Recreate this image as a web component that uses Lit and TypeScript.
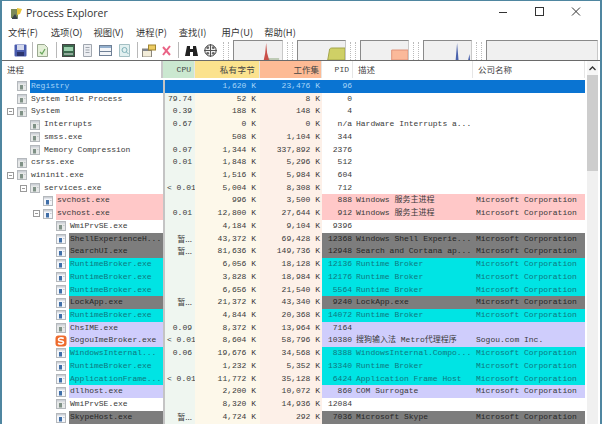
import { LitElement, html, css, svg } from "lit";
import { customElement } from "lit/decorators.js";

type Row = { n: string; l: number; e?: boolean; ic?: "g" | "b" | "s"; c?: string; cpu?: string; p: string; w: string; pid: string; d?: string; co?: string };
const MS = "Microsoft Corporation";
const rows: Row[] = [
  { n: "Registry", l: 0, c: "sel", p: "1,620 K", w: "23,476 K", pid: "96" },
  { n: "System Idle Process", l: 0, cpu: "79.74", p: "52 K", w: "8 K", pid: "0" },
  { n: "System", l: 0, e: true, cpu: "0.39", p: "188 K", w: "148 K", pid: "4" },
  { n: "Interrupts", l: 1, cpu: "0.67", p: "0 K", w: "0 K", pid: "n/a", d: "Hardware Interrupts a..." },
  { n: "smss.exe", l: 1, p: "508 K", w: "1,104 K", pid: "344" },
  { n: "Memory Compression", l: 1, cpu: "0.07", p: "1,344 K", w: "337,892 K", pid: "2376" },
  { n: "csrss.exe", l: 0, cpu: "0.01", p: "1,848 K", w: "5,296 K", pid: "512" },
  { n: "wininit.exe", l: 0, e: true, p: "1,516 K", w: "5,984 K", pid: "604" },
  { n: "services.exe", l: 1, e: true, cpu: "< 0.01", p: "5,004 K", w: "8,308 K", pid: "712" },
  { n: "svchost.exe", l: 2, ic: "b", c: "pink", p: "996 K", w: "3,500 K", pid: "888", d: "Windows 服务主进程", co: MS },
  { n: "svchost.exe", l: 2, e: true, ic: "b", c: "pink", cpu: "0.01", p: "12,800 K", w: "27,644 K", pid: "912", d: "Windows 服务主进程", co: MS },
  { n: "WmiPrvSE.exe", l: 3, p: "4,184 K", w: "9,104 K", pid: "9396" },
  { n: "ShellExperienceH...", l: 3, ic: "b", c: "gray", cpu: "暂...", p: "43,372 K", w: "69,428 K", pid: "12368", d: "Windows Shell Experie...", co: MS },
  { n: "SearchUI.exe", l: 3, ic: "b", c: "gray", cpu: "暂...", p: "81,636 K", w: "149,736 K", pid: "12948", d: "Search and Cortana ap...", co: MS },
  { n: "RuntimeBroker.exe", l: 3, ic: "b", c: "cyan", p: "6,056 K", w: "18,128 K", pid: "12136", d: "Runtime Broker", co: MS },
  { n: "RuntimeBroker.exe", l: 3, ic: "b", c: "cyan", p: "3,828 K", w: "18,984 K", pid: "12176", d: "Runtime Broker", co: MS },
  { n: "RuntimeBroker.exe", l: 3, ic: "b", c: "cyan", p: "6,656 K", w: "21,540 K", pid: "5564", d: "Runtime Broker", co: MS },
  { n: "LockApp.exe", l: 3, ic: "b", c: "gray", cpu: "暂...", p: "21,372 K", w: "43,340 K", pid: "9240", d: "LockApp.exe", co: MS },
  { n: "RuntimeBroker.exe", l: 3, ic: "b", c: "cyan", p: "4,844 K", w: "20,368 K", pid: "14072", d: "Runtime Broker", co: MS },
  { n: "ChsIME.exe", l: 3, c: "lav", cpu: "0.09", p: "8,372 K", w: "13,964 K", pid: "7164" },
  { n: "SogouImeBroker.exe", l: 3, ic: "s", c: "lav", cpu: "< 0.01", p: "8,604 K", w: "58,796 K", pid: "10380", d: "搜狗输入法 Metro代理程序", co: "Sogou.com Inc." },
  { n: "WindowsInternal...", l: 3, ic: "b", c: "cyan", cpu: "0.06", p: "19,676 K", w: "34,568 K", pid: "8388", d: "WindowsInternal.Compo...", co: MS },
  { n: "RuntimeBroker.exe", l: 3, ic: "b", c: "cyan", p: "1,232 K", w: "5,352 K", pid: "13340", d: "Runtime Broker", co: MS },
  { n: "ApplicationFrame...", l: 3, ic: "b", c: "cyan", cpu: "< 0.01", p: "11,772 K", w: "35,128 K", pid: "6424", d: "Application Frame Host", co: MS },
  { n: "dllhost.exe", l: 3, ic: "b", c: "lav", p: "2,200 K", w: "10,072 K", pid: "860", d: "COM Surrogate", co: MS },
  { n: "WmiPrvSE.exe", l: 3, p: "8,320 K", w: "14,936 K", pid: "12084" },
  { n: "SkypeHost.exe", l: 3, ic: "b", c: "gray", cpu: "暂...", p: "4,724 K", w: "292 K", pid: "7036", d: "Microsoft Skype", co: MS },
];

const menus = ["文件(F)", "选项(O)", "视图(V)", "进程(P)", "查找(I)", "用户(U)", "帮助(H)"];

const tools: { w: number; m: number; i: unknown }[] = [
  { w: 13, m: 5, i: svg`<rect x="0.5" y="0.5" width="12" height="12" rx="1" fill="#4a5cae"/><rect x="3" y="1" width="7" height="5" fill="#d4d9ec"/><rect x="3" y="8" width="7" height="4" fill="#2c356e"/>` },
  { w: 1, m: 4, i: svg`<rect width="1" height="16" fill="#b8b8b8"/>` },
  { w: 11, m: 8, i: svg`<path d="M.5.5h7l3 3v9H.5z" fill="#e4efd8" stroke="#9aa890"/><path d="M3 8l2 2 3-5" fill="none" stroke="#6aa85c" stroke-width="1.300"/>` },
  { w: 1, m: 5, i: svg`<rect width="1" height="16" fill="#b8b8b8"/>` },
  { w: 13, m: 7, i: svg`<rect x=".5" y=".5" width="12" height="12" fill="#3c6a4e" stroke="#444"/><rect x="2" y="3" width="9" height="4" fill="#9ccfac"/><path d="M2 10h9" stroke="#e8e8e8"/>` },
  { w: 11, m: 6, i: svg`<path d="M1.500.5h8v12h-8z" fill="#eceef2" stroke="#a0a6ae"/><path d="M3.500 3.500h4M3.500 6h4M3.500 8.500h4" stroke="#a0a6ae"/>` },
  { w: 13, m: 7, i: svg`<rect x=".5" y="1.500" width="12" height="10" fill="#f3f5f8" stroke="#6f8096"/><rect x="1" y="2" width="11" height="2" fill="#94b0ce"/><path d="M1 7.500h11" stroke="#6f8096"/>` },
  { w: 11, m: 7, i: svg`<path d="M.5.5h10v12H.5z" fill="#e2f0f0" stroke="#a4c0c4"/><circle cx="5.500" cy="6" r="2.500" fill="none" stroke="#7eb0b8"/><path d="M7.500 8l2 2" stroke="#7eb0b8"/>` },
  { w: 1, m: 4, i: svg`<rect width="1" height="16" fill="#b8b8b8"/>` },
  { w: 14, m: 5, i: svg`<rect x=".5" y="5" width="9" height="8" fill="#f2ecd8" stroke="#8a867c"/><rect x="1" y="5" width="9" height="2" fill="#80838a"/><rect x="6.500" y="1" width="7" height="5" fill="#edcc62" stroke="#a08430"/>` },
  { w: 11, m: 6, i: svg`<path d="M2 3l7 8M9 2L2 11" stroke="#ea6486" stroke-width="2" fill="none"/>` },
  { w: 1, m: 5, i: svg`<rect width="1" height="16" fill="#b8b8b8"/>` },
  { w: 15, m: 5, i: svg`<path d="M3 2h3v3h3V2h3l2 10h-5V8H6v4H1z" fill="#222"/>` },
  { w: 13, m: 7, i: svg`<circle cx="6.500" cy="6.500" r="5.700" fill="#f0f0f0" stroke="#444"/><path d="M6.500 0v13M0 6.500h13" stroke="#555"/><circle cx="3.700" cy="3.700" r="1.400" fill="#666"/><circle cx="9.300" cy="3.700" r="1.400" fill="#666"/><circle cx="3.700" cy="9.300" r="1.400" fill="#666"/><circle cx="9.300" cy="9.300" r="1.400" fill="#666"/>` },
];

const graphs: { w: number; g: unknown }[] = [
  { w: 50, g: svg`<path d="M31 19L32.500 12 33.500 2 34.500 12 36 17 37 19z" fill="#c9504a"/><path d="M36 18h11" stroke="#8aa47a"/>` },
  { w: 49, g: svg`<path d="M31 19l2-11q1-1 2-1H49v12z" fill="#cfd066" stroke="#a2a448"/>` },
  { w: 49, g: svg`<path d="M32 19V9h17v10z" fill="#fbb99a" stroke="#e0917a"/>` },
  { w: 49, g: svg`<path d="M33 19l.800-9 .700-8 .700 8 .800 9zM46 19l1.500-6 .5 6z" fill="#4a62ac"/>` },
  { w: 112, g: svg`` },
];

function procIcon(kind: "g" | "b" | "s") {
  if (kind === "s")
    return html`<svg class="ic sg" viewBox="0 0 12 12"><rect x=".5" y=".5" width="11" height="11" rx="3" fill="#ee6b2d"/><path d="M8.800 3.500C6 2.300 3.200 3 3.500 4.800 3.800 6.500 8.500 5.500 8.500 7.500 8.500 9.300 5 9.500 3 8.300" fill="none" stroke="#fff" stroke-width="1.600"/></svg>`;
  const m = kind === "b" ? "#3f6ea8" : "#7f9186";
  const bg = kind === "b" ? "#f4f6fa" : "#e6e8e8";
  return html`<svg class="ic" viewBox="0 0 10 10"><rect x=".5" y=".5" width="9" height="9" fill="${bg}" stroke="#b4b8bc"/><rect x="1" y="1" width="8" height="1.500" fill="#ccd0d6"/><rect x="3" y="4" width="3" height="4.500" fill="${m}"/><rect x="7" y="4" width="1.500" height="1" fill="#c4c8cc"/></svg>`;
}

@customElement("app-root")
export class AppRoot extends LitElement {
  static styles = css`
    :host { display: block; width: 602px; height: 424px; overflow: hidden; background: #fff; }
    .win { box-sizing: border-box; width: 602px; height: 424px; overflow: hidden; border: 2px solid #4f86a0; border-top-width: 1px; border-bottom: 0; display: flex; flex-direction: column; font-family: "Noto Sans CJK SC", "Noto Sans", sans-serif; color: #222; background: #fff; }
    .title { height: 24px; flex: none; display: flex; align-items: center; padding-left: 8px; }
    .title .logo { width: 13px; height: 13px; margin-right: 3px; }
    .title .tx { font: 10.500px "Open Sans", "Noto Sans", sans-serif; color: #333; flex: 1; }
    .ctl { width: 36.500px; height: 22px; display: flex; align-items: center; justify-content: center; }
    .ctl svg { width: 10px; height: 10px; }
    .ctls { display: flex; margin-right: 6px; align-self: flex-start; }
    .menu { height: 15px; flex: none; display: flex; gap: 12px; padding-left: 6px; font-size: 9.300px; line-height: 15px; color: #333; }
    .menu span { white-space: nowrap; width: 30.700px; }
    .bar { height: 20px; flex: none; display: flex; align-items: flex-end; background: #fff; border-bottom: 1px solid #6a6a6a; }
    .tools { display: flex; align-items: center; height: 20px; padding-left: 12px; width: 217px; flex: none; box-sizing: border-box; }
    .tools svg { flex: none; display: block; }
    .grip { width: 4px; height: 18px; border-left: 1px dotted #bbb; border-right: 1px dotted #bbb; margin: 0 4px; flex: none; align-self: flex-end; }
    .graphs { display: flex; height: 20px; }
    .graph { display: flex; height: 20px; align-items: flex-end; }
    .graph svg { display: block; background: #f0f0f0; border-top: 1px solid #8a8a8a; border-left: 1px solid #8a8a8a; border-right: 1px solid #c8c8c8; box-sizing: border-box; height: 20px; flex: none; }
    .main { flex: 1; display: flex; min-height: 0; }
    .table { width: 585px; flex: none; overflow: hidden; }
    .head, .row { display: grid; grid-template-columns: 161px 32px 65px 62px 31px 120px 112px; }
    .head { height: 17px; margin-bottom: 2px; font-size: 8.500px; line-height: 17px; color: #444; }
    .hc { box-sizing: border-box; padding: 0 2px; border-right: 1px solid #e6e6e6; white-space: nowrap; overflow: hidden; }
    .hn { padding-left: 5px; border-right: 2px solid #c8c8c8; }
    .hcpu { background: #cbe8d0; text-align: right; padding-right: 3px; font: 8px/17px "Liberation Mono", monospace; }
    .hp { background: #fbe28d; text-align: right; padding-right: 4px; letter-spacing: .3px; }
    .hw { background: #fdbb95; text-align: right; padding-right: 2px; }
    .hpid { text-align: right; padding-right: 3px; font: 8px/17px "Liberation Mono", monospace; }
    .hd { padding-left: 5px; }
    .row { height: 12.730px; font: 8px/11px "Liberation Mono", "Noto Sans CJK SC", monospace; color: #3a3a3a; white-space: nowrap; }
    .row:last-child { height: 15px; }
    .nm { display: flex; align-items: center; overflow: hidden; height: 100%; }
    .sepl { border-left: 2px solid #c4c4c4; box-sizing: border-box; }
    .exp { width: 7px; height: 7px; box-sizing: border-box; flex: none; margin-right: 3px; }
    .exp.on { border: 1px solid #9a9a9a; background: linear-gradient(#9a9a9a, #9a9a9a) center / 3px 1px no-repeat #fff; }
    .ic { width: 10px; height: 10px; flex: none; display: block; }
    .ic.sg { width: 12px; height: 12px; margin-right: -1px; margin-left: -1px; }
    .lbl { flex: 1; min-width: 0; padding-left: 1px; margin-left: 3px; height: 100%; }
    .cell { padding: 0 2px; box-sizing: border-box; text-align: right; overflow: hidden; }
    .ccpu { background: #eff6f0; padding-right: 3px; }
    .ccpu .cjk { font-family: "Noto Sans CJK SC", sans-serif; }
    .cp { background: #fdf8ea; padding-right: 4px; }
    .cw { background: #fdf0e8; padding-right: 2px; }
    .cpid { padding-right: 1px; }
    .cd { text-align: left; padding-left: 3px; overflow: visible; }
    .cc { text-align: left; padding-left: 3px; overflow: visible; }
    .pink .lbl, .pink .fill { background: #ffc8c8; }
    .gray .lbl, .gray .fill { background: #7d7d7d; color: #262626; }
    .cyan .lbl, .cyan .fill { background: #00e4e4; color: #0f7880; }
    .lav .lbl, .lav .fill { background: #cfcdfc; }
    .sel .lbl, .sel .cell { background: #0a74d2; color: #a6d4f8; }
    .scroll { width: 13px; flex: none; display: flex; flex-direction: column; }
    .sb { width: 11px; flex: 1; background: #f0f0f0; }
    .up { height: 14px; background: #f6f6f6; display: flex; align-items: center; justify-content: center; }
    .up svg { width: 7px; height: 5px; }
    .thumb { height: 96px; background: #cdcdcd; }
  `;

  render() {
    return html`<div class="win">
      <div class="title">
        <svg class="logo" viewBox="0 0 13 13"><rect x="1" y="2" width="7" height="9" fill="#7c8a58"/><path d="M7 1l5 1-2 5-3 1z" fill="#e8c53c"/><path d="M2 11l3-4 3 5H2z" fill="#39424a"/></svg>
        <span class="tx">Process Explorer</span>
        <div class="ctls">
          <div class="ctl"><svg viewBox="0 0 10 10"><path d="M1 5.500h8" stroke="#333"/></svg></div>
          <div class="ctl"><svg viewBox="0 0 10 10"><rect x="1.500" y=".5" width="8" height="8" fill="none" stroke="#333"/></svg></div>
          <div class="ctl"><svg viewBox="0 0 10 10"><path d="M1 .5l8 8M9 .5l-8 8" stroke="#333" fill="none"/></svg></div>
        </div>
      </div>
      <div class="menu">${menus.map((m) => html`<span>${m}</span>`)}</div>
      <div class="bar">
        <div class="tools">
          ${tools.map((t, i) => html`<svg width="${t.w}" height="${t.w === 1 ? 16 : 13}" viewBox="0 0 ${t.w} ${t.w === 1 ? 16 : 13}" style="margin-right:${i === tools.length - 1 ? 0 : t.m}px">${t.i}</svg>`)}
        </div>
        <div class="graphs">
          ${graphs.map((g) => html`<div class="graph">
            <div class="grip"></div>
            <svg width="${g.w}" height="20" viewBox="0 0 ${g.w} 19" preserveAspectRatio="none">${g.g}</svg>
          </div>`)}
        </div>
      </div>
      <div class="main">
        <div class="table">
          <div class="head">
            <div class="hc hn">进程</div>
            <div class="hc hcpu">CPU</div>
            <div class="hc hp">私有字节</div>
            <div class="hc hw">工作集</div>
            <div class="hc hpid">PID</div>
            <div class="hc hd">描述</div>
            <div class="hc hd">公司名称</div>
          </div>
          ${rows.map((r) => html`<div class="row ${r.c ?? ""}">
            <div class="nm">
              <span style="width:${r.l * 13 + 5}px;flex:none"></span>
              <span class="exp ${r.e ? "on" : ""}"></span>
              ${procIcon(r.ic ?? "g")}
              <span class="lbl">${r.n}</span>
            </div>
            <div class="cell ccpu sepl">${r.cpu?.startsWith("暂") ? html`<span class="cjk">${r.cpu}</span>` : r.cpu ?? ""}</div>
            <div class="cell cp">${r.p}</div>
            <div class="cell cw">${r.w}</div>
            <div class="cell cpid fill">${r.pid}</div>
            <div class="cell cd fill">${r.d ?? ""}</div>
            <div class="cell cc fill">${r.co ?? ""}</div>
          </div>`)}
        </div>
        <div class="scroll">
          <div class="sb">
            <div class="up"><svg viewBox="0 0 7 5"><path d="M.5 4L3.500 1l3 3" fill="none" stroke="#333" stroke-width="1.300"/></svg></div>
            <div class="thumb"></div>
          </div>
        </div>
      </div>
    </div>`;
  }
}
